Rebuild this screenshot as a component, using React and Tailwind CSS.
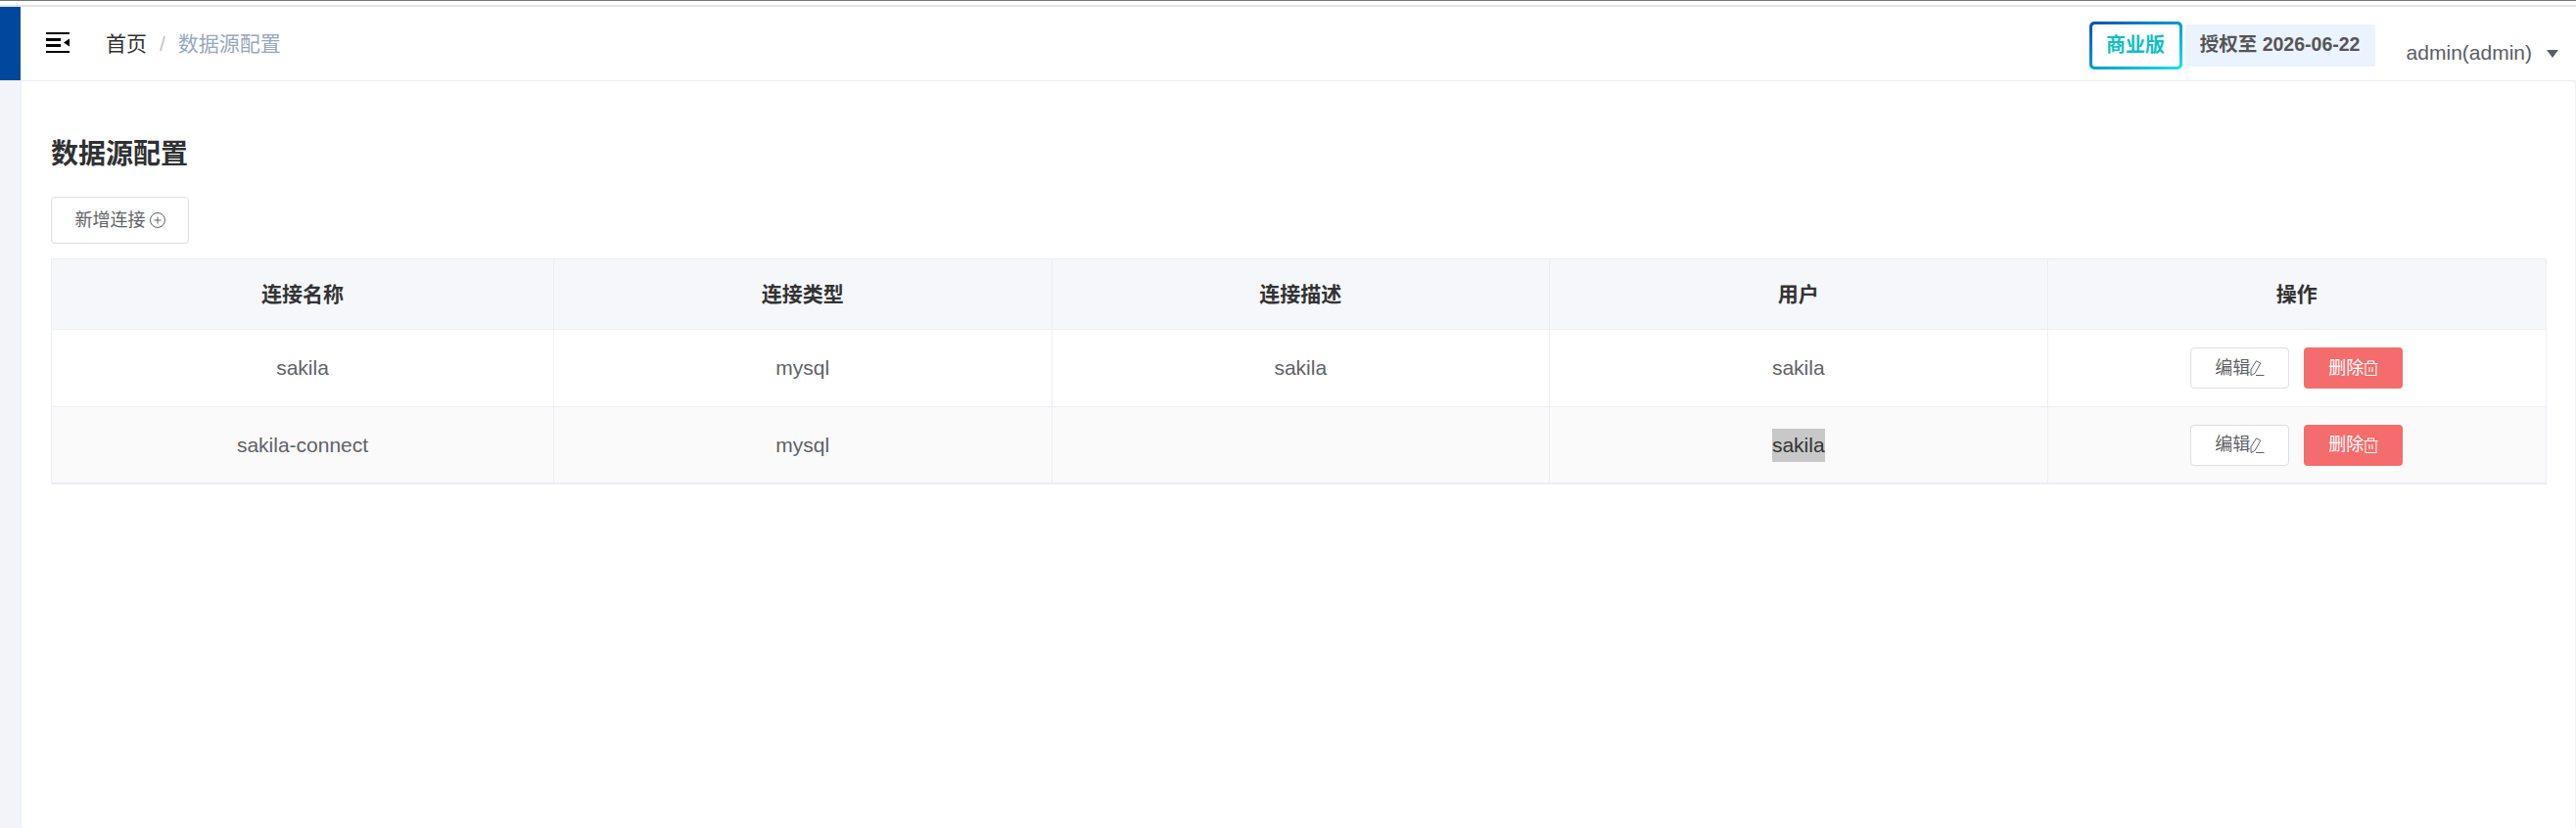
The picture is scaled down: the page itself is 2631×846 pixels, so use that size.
import React from 'react';

const font = { fontFamily: '"Liberation Sans", "Noto Sans CJK SC", sans-serif' };

const rows = [
  { name: 'sakila', type: 'mysql', desc: 'sakila', user: 'sakila' },
  { name: 'sakila-connect', type: 'mysql', desc: '', user: 'sakila', selected: true },
];

const PlusIcon = () => (
  <svg width="16" height="16" viewBox="0 0 16 16" fill="none" stroke="currentColor" strokeWidth="1" className="ml-[4px] shrink-0">
    <circle cx="8" cy="8" r="7.5" />
    <path d="M8 4.5v7M4.5 8h7" />
  </svg>
);

const EditIcon = () => (
  <svg width="15" height="16" viewBox="0 0 15 16" fill="none" stroke="currentColor" strokeWidth="1" className="shrink-0">
    <path d="M6.5.8L10.8 3 5 13.5l-4 2v-6z" />
    <path d="M6 15.5h8.5" />
  </svg>
);

const TrashIcon = () => (
  <svg width="15" height="16" viewBox="0 0 15 16" fill="none" stroke="currentColor" strokeWidth="1.1" className="shrink-0">
    <path d="M.5 3.5h14M4.5 3.5V1h6v2.5M2 3.5v12h11v-12M6 7v5M9 7v5" />
  </svg>
);

const MenuIcon = () => (
  <svg width="24" height="21" viewBox="0 0 24 21" fill="#000" className="block">
    <rect x="0" y="0" width="24" height="2" />
    <rect x="0" y="6" width="15" height="3" />
    <rect x="0" y="12" width="15" height="3" />
    <rect x="0" y="19" width="24" height="2" />
    <path d="M18 10.5l6-4v8z" />
  </svg>
);

const App = () => {
  return (
    <div style={font} className="h-[846px] w-full flex flex-col bg-[#f2f4f9] overflow-hidden text-[#606266]">
      <div className="h-[7px] shrink-0 bg-white border-t border-[#777777]">
        <div className="mt-[4px] h-[2px] bg-[#e4e4e4]" />
      </div>

      {/* Header */}
      <div className="h-[76px] shrink-0 flex bg-white border-b border-[#eceef4]">
        <div className="w-[21px] h-[75px] bg-[#00479d] shrink-0" />
        <div className="flex-1 flex items-center pl-[26px] pr-[18px]">
          <div className="-mt-[2px]"><MenuIcon /></div>
          <div className="ml-[37px] flex items-center text-[21px]">
            <span className="text-[#303133]">首页</span>
            <span className="mx-[13px] text-[#c0c4cc]">/</span>
            <span className="text-[#97a8be]">数据源配置</span>
          </div>

          <div className="ml-auto flex items-center">
            <div className="w-[95px] h-[49px] rounded-[5px] p-[3px] bg-linear-to-br from-[#0a4fb5] to-[#1de3ee] mt-[3px]">
              <div className="w-full h-full rounded-[3px] bg-white flex items-center justify-center text-[20px] font-bold text-[#0fc0c4]">
                商业版
              </div>
            </div>
            <div className="ml-[3px] w-[194px] h-[43px] rounded-[3px] bg-[#ebf3fe] flex items-center justify-center text-[19.5px] font-bold text-[#555555] mt-[3px]">
              授权至 2026-06-22
            </div>
            <span className="ml-[32px] text-[21px] text-[#5a5e66] mt-[19px]">admin(admin)</span>
            <div className="ml-[15px] mt-[21px] w-0 h-0 border-x-[6px] border-x-transparent border-t-[8px] border-t-[#5a5e66]" />
          </div>
        </div>
      </div>

      {/* Body */}
      <div className="flex-1 flex">
        <div className="w-[21px] shrink-0" />
        <div className="flex-1 bg-white rounded-t-[4px] border-x border-[#eef0f5] pl-[30px] pr-[29px]">
          <h1 className="mt-[55px] text-[28px] leading-[40px] font-bold text-[#303133]">数据源配置</h1>
          <button className="mt-[23px] w-[141px] h-[48px] flex items-center justify-center bg-white border border-[#dcdfe6] rounded-[4px] text-[18px] text-[#606266]">
            新增连接<PlusIcon />
          </button>

          <div className="mt-[15px] border border-[#ebeef5] border-b-2">
            <div className="grid grid-cols-[513px_repeat(4,1fr)] h-[72px] bg-[#f5f7fb] border-b border-[#ebeef5]">
              {['连接名称', '连接类型', '连接描述', '用户', '操作'].map((title, i) => (
                <div key={title} className={`flex items-center justify-center text-[21px] font-bold text-[#333333] ${i < 4 ? 'border-r border-[#ebeef5]' : ''}`}>
                  {title}
                </div>
              ))}
            </div>
            {rows.map((row, idx) => (
              <div key={row.name} className={`grid grid-cols-[513px_repeat(4,1fr)] ${idx === 1 ? 'h-[77px] bg-[#fafafa]' : 'h-[79px] bg-white border-b border-[#ebeef5]'}`}>
                <div className="flex items-center justify-center text-[21px] border-r border-[#ebeef5]">{row.name}</div>
                <div className="flex items-center justify-center text-[21px] border-r border-[#ebeef5]">{row.type}</div>
                <div className="flex items-center justify-center text-[21px] border-r border-[#ebeef5]">{row.desc}</div>
                <div className="flex items-center justify-center text-[21px] border-r border-[#ebeef5]">
                  <span className={row.selected ? 'bg-[#c8c8c8] text-[#333333] leading-[34px]' : ''}>{row.user}</span>
                </div>
                <div className="flex items-center justify-center gap-[15px]">
                  <button className="w-[101px] h-[42px] flex items-center justify-center bg-white border border-[#dcdfe6] rounded-[4px] text-[18px] text-[#606266]">
                    编辑<EditIcon />
                  </button>
                  <button className="w-[101px] h-[42px] flex items-center justify-center bg-[#f56c6c] rounded-[4px] text-[18px] text-white">
                    删除<TrashIcon />
                  </button>
                </div>
              </div>
            ))}
          </div>
        </div>
      </div>
    </div>
  );
};

export default App;
